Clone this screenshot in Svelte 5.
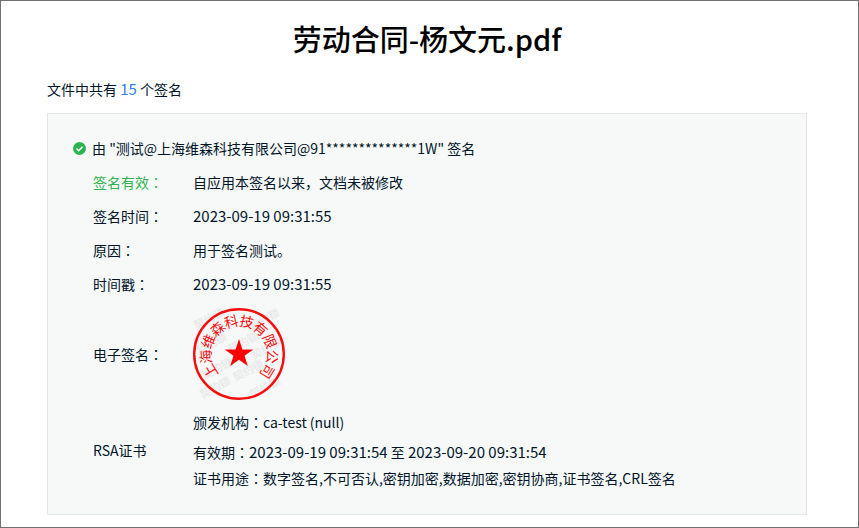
<script>
  let fileName = '劳动合同-杨文元.pdf';
  let signCount = 15;
  let signer = '测试@上海维森科技有限公司@91**************1W';
  let signTime = '2023-09-19 09:31:55';

  let cert = {
    issuer: 'ca-test (null)',
    from: '2023-09-19 09:31:54',
    to: '2023-09-20 09:31:54',
    usage: '数字签名,不可否认,密钥加密,数据加密,密钥协商,证书签名,CRL签名'
  };

  // company name, spread over the upper arc of the seal
  let sealChars = '上海维森科技有限公司'.split('');
  let sealStep = 27;

  let watermarks = [
    [18, 14], [73, 15],
    [20, 39], [52, 38],
    [26, 64], [57, 66], [75, 44],
    [24, 83], [74, 83]
  ];

  function charAngle(i) {
    return (i - (sealChars.length - 1) / 2) * sealStep;
  }
</script>

<div class="page">
  <h1>{fileName}</h1>
  <p class="summary">文件中共有 <span class="count">{signCount}</span> 个签名</p>

  <section class="card">
    <div class="signer">
      <svg class="check" viewBox="0 0 12 12" aria-hidden="true">
        <circle cx="6" cy="6" r="6" fill="#2fb350" />
        <path d="M3.2 6.1 5.2 8 8.8 4.3" fill="none" stroke="#fff" stroke-width="1.3" />
      </svg>
      <span>由 "{signer}" 签名</span>
    </div>

    <dl>
      <div class="row">
        <dt class="valid">签名有效<span class="mark">：</span></dt>
        <dd>自应用本签名以来，文档未被修改</dd>
      </div>
      <div class="row">
        <dt>签名时间<span class="mark">：</span></dt>
        <dd><time>{signTime}</time></dd>
      </div>
      <div class="row">
        <dt>原因<span class="mark">：</span></dt>
        <dd>用于签名测试。</dd>
      </div>
      <div class="row">
        <dt>时间戳<span class="mark">：</span></dt>
        <dd><time>{signTime}</time></dd>
      </div>
      <div class="row seal-row">
        <dt>电子签名<span class="mark">：</span></dt>
        <dd>
          <svg class="seal" viewBox="0 0 92 92">
            {#each watermarks as [x, y]}
              <text class="watermark" {x} {y} transform="rotate(-28 {x} {y})">契约锁</text>
            {/each}
            <circle cx="46" cy="46" r="44.8" fill="none" stroke="#f60d0d" stroke-width="2.4" />
            <polygon
              points="46,31 49.4,41.4 60.3,41.4 51.5,47.8 54.8,58.1 46,51.7 37.2,58.1 40.5,47.8 31.7,41.4 42.6,41.4"
              fill="#f00"
            />
            {#each sealChars as char, i}
              <text class="seal-char" x="46" y="18" transform="rotate({charAngle(i)} 46 46)">{char}</text>
            {/each}
          </svg>
        </dd>
      </div>
      <div class="row cert-row">
        <dt>RSA证书</dt>
        <dd>
          <p class="issuer">颁发机构<span class="mark">：</span>{cert.issuer}</p>
          <p>有效期<span class="mark">：</span><time>{cert.from}</time> 至 <time>{cert.to}</time></p>
          <p>证书用途<span class="mark">：</span>{cert.usage}</p>
        </dd>
      </div>
    </dl>
  </section>
</div>

<style>
  :global(body) {
    background: #fff;
  }

  .page {
    box-sizing: border-box;
    min-height: 100vh;
    padding: 15px 51px 12px 46px;
    border: 1px solid #717071;
    font-family: "Noto Sans CJK SC", sans-serif;
    font-size: 14px;
    line-height: 26px;
    color: #001529;
  }

  h1, p, dl, dd {
    margin: 0;
  }

  h1 {
    font-size: 29px;
    font-weight: 500;
    line-height: 44px;
    text-align: center;
    color: #000;
  }

  .summary {
    margin: 16px 0 11px;
  }

  .count {
    font-size: 15px;
    color: #2f80f0;
  }

  .card {
    padding: 21px 23px;
    border: 1px solid #e4e7e7;
    background: #f7f9f9;
  }

  .signer {
    display: flex;
    align-items: center;
    gap: 6px;
    margin-bottom: 4px;
    padding-left: 2px;
  }

  .check {
    flex: none;
    width: 13px;
    height: 13px;
  }

  .row {
    display: flex;
    align-items: center;
    min-height: 34px;
    padding-left: 22px;
  }

  dt {
    flex: none;
    width: 100px;
  }

  .valid {
    color: #2fb350;
  }

  time {
    font-size: 15px;
  }

  /* centred full-width punctuation */
  .mark {
    font-family: "Noto Sans CJK TC", sans-serif;
  }

  .seal-row {
    min-height: 106px;
  }

  .seal {
    display: block;
    width: 92px;
    height: 92px;
  }

  .seal-char {
    font-size: 14px;
    text-anchor: middle;
    fill: #f60d0d;
  }

  .watermark {
    font-size: 11px;
    font-weight: 700;
    text-anchor: middle;
    fill: #e8eaea;
  }

  .cert-row {
    padding-top: 2px;
    padding-bottom: 2px;
  }

  .issuer {
    margin-bottom: 4px;
  }
</style>
